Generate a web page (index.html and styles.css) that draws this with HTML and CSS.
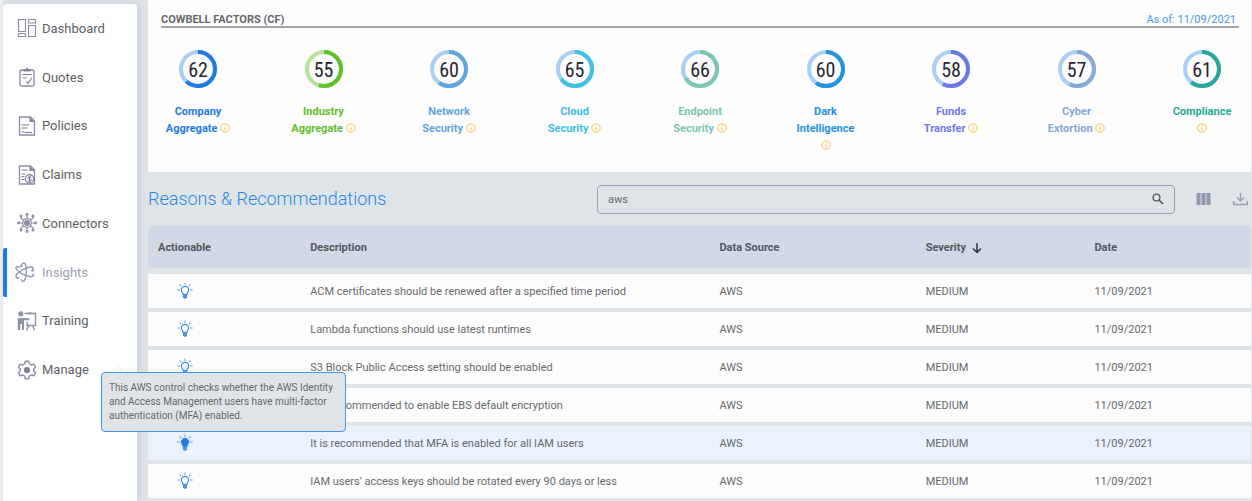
FILE: index.html
```html
<!DOCTYPE html>
<html lang="en">
<head>
<meta charset="utf-8">
<title>Insights</title>
<link rel="stylesheet" href="styles.css">
</head>
<body>
<svg class="defs" aria-hidden="true">
  <symbol id="info" viewBox="0 0 10 10"><circle cx="5" cy="5" r="4.2" fill="none" stroke="#fbc254" stroke-width="1"/><path d="M5 4.4v3M5 2.5v1" stroke="#fbc254" stroke-width="1.1"/></symbol>
  <symbol id="bulb" viewBox="0 0 16 18"><path d="M6.2 12.600C6.200 11 4.400 10.100 4.400 8a3.600 3.600 0 0 1 7.200 0c0 2.100-1.800 3-1.800 4.600z" stroke="#2f87e4" stroke-width="1.100"/><path d="M6 13h4v2.200l-1.200 1.600H7.200L6 15.200z" fill="#4a98ea"/><path d="M8 .5v2.300M.3 8h2.900M12.800 8h2.900M2.600 2.700l1.500 1.500M13.400 2.700 11.900 4.200" fill="none" stroke="#5ba2ec" stroke-width="1.100"/></symbol>
</svg>
<div class="app">
  <nav class="sidebar"><div class="nav-list">
    <a class="nav-item" href="#"><svg viewBox="0 0 20 20"><g fill="none" stroke="#8b8ca6" stroke-width="1.100"><path d="M1.500 1.500h7v12h-7zM11.500 1.500h7v3.500h-7zM11.500 7.500h7v11h-7zM1.500 15.500h7v3h-7z"/></g></svg>Dashboard</a>
    <a class="nav-item" href="#"><svg viewBox="0 0 20 20"><rect x="3" y="3" width="14" height="16" rx="2" fill="none" stroke="#8b8ca6" stroke-width="1.400"/><path d="M6.500 4.500V2.200h2L10 .2l1.500 2h2v2.300z" fill="#7d7e9b"/><path d="M5.500 7.500h9M5.500 11h4M9.500 14.500l1.500 2 4-6" fill="none" stroke="#7d7e9b" stroke-width="1.200"/></svg>Quotes</a>
    <a class="nav-item" href="#"><svg viewBox="0 0 20 20"><path d="M2.500 1h11L17.500 5v14h-15z" fill="none" stroke="#8b8ca6" stroke-width="1.300"/><path d="M12.500 1v5h5z" fill="#7d7e9b"/><path d="M4.500 9h8M4.500 12h6M4.500 16h3M8 16.500h7" fill="none" stroke="#7d7e9b" stroke-width="1.200"/></svg>Policies</a>
    <a class="nav-item" href="#"><svg viewBox="0 0 20 20"><path d="M2.500 1h11L17.500 5v14h-15z" fill="none" stroke="#8b8ca6" stroke-width="1.300"/><path d="M12.500 1v5h5z" fill="#7d7e9b"/><path d="M4.500 5h6M4.500 9h4M4.500 11.500h3M4.500 14.500h3" stroke="#7d7e9b" stroke-width="1.200"/><circle cx="12.500" cy="13.800" r="4.200" fill="#f2f2f6" stroke="#7d7e9b" stroke-width="1.100"/><path d="M14.300 12.300c-.5-1-3.400-1-3.400.3 0 1.500 3.500 1 3.500 2.500 0 1.400-3.200 1.300-3.700.2M12.600 10.700v6.300" fill="none" stroke="#7d7e9b"/></svg>Claims</a>
    <a class="nav-item" href="#"><svg viewBox="0 0 20 20"><g fill="none" stroke="#8b8ca6" stroke-width="1.200"><circle cx="10" cy="10" r="4.300"/><path d="M10 1v5M10 14v5M1 10h5M14 10h5M4 3v2l3 2.500M16 3v2l-3 2.500M4 17v-2l3-2.500M16 17v-2l-3-2.500"/></g><g fill="#8b8ca6"><circle cx="10" cy="10" r="3"/><circle cx="10" cy="1.400" r="1.400"/><circle cx="10" cy="18.600" r="1.400"/><circle cx="1.400" cy="10" r="1.400"/><circle cx="18.600" cy="10" r="1.400"/><circle cx="4" cy="3" r="1.500"/><circle cx="16" cy="3" r="1.500"/><circle cx="4" cy="17" r="1.500"/><circle cx="16" cy="17" r="1.500"/></g></svg>Connectors</a>
    <a class="nav-item active" href="#" aria-current="page"><svg viewBox="0 0 20 20"><g fill="none" stroke="#8c9ab3" stroke-width="1.400" stroke-linecap="round"><path d="M6.500 3.500C7 1 9.500 0 10.500 2.500c1.300 3 1 11-.5 15-1 2.500-3 2-3.700.2"/><path d="M4.500 5C2 4 .2 5 1.300 7c1.700 3 8 6.500 13.500 7.500 3.500.6 4.200-.8 3.200-2.500"/><path d="M2.500 16C.5 15.500.5 13.500 2 12 5 9 11 5.500 15 5c3-.3 4 1.500 2.500 3.500"/></g><g fill="#8c9ab3"><circle cx="6.300" cy="4" r="1.200"/><circle cx="17.500" cy="8.500" r="1.200"/><circle cx="3" cy="16" r="1.200"/></g></svg>Insights</a>
    <a class="nav-item" href="#"><svg viewBox="0 0 20 20"><circle cx="3.800" cy="2.800" r="2.600" fill="#8c95a8"/><path d="M.8 7h7.700l4 .5v1.700H7V19H5v-6H3.300v6H.8z" fill="#8c95a8"/><path d="M7.500 2.500H18.500V14.500H9M12 14.500 9.500 19.500M15.500 14.500l2 5M9.500 11l2 3.500" fill="none" stroke="#8c95a8" stroke-width="1.400"/><path d="M11.500 1.200h3v2h-3z" fill="#8c95a8"/></svg>Training</a>
    <a class="nav-item" href="#"><svg viewBox="0 0 20 20"><path d="M8.200 1.300h3.600l.6 2.600 1.900 1.100 2.500-.8 1.800 3.100-1.900 1.800v1.800l1.900 1.800-1.800 3.100-2.500-.8-1.900 1.100-.6 2.600H8.200l-.6-2.600L5.700 15l-2.500.8-1.800-3.100 1.900-1.800V9.100L1.400 7.300l1.800-3.100 2.500.8 1.900-1.100z" fill="none" stroke="#8b8ca6" stroke-width="1.400" stroke-linejoin="round"/><circle cx="10" cy="10" r="3.100" fill="#7d7e9b"/></svg>Manage<svg class="chevron" viewBox="0 0 6 10"><path d="M1 1l4 4-4 4" fill="none" stroke="#e4e6ea"/></svg></a>
  </div></nav>

  <main class="main">
    <section class="card">
      <header class="card-head"><h2>COWBELL FACTORS (CF)</h2><span class="as-of">As of: 11/09/2021</span></header>
      <div class="factors">
        <div class="factor company"><div class="ring"><svg viewBox="0 0 38 38"><circle class="track" cx="19" cy="19" r="17"/><circle class="arc" cx="19" cy="19" r="17" pathLength="100" stroke-dasharray="62 38"/></svg><span>62</span></div><p>Company<br>Aggregate <svg class="info"><use href="#info"/></svg></p></div>
        <div class="factor industry"><div class="ring"><svg viewBox="0 0 38 38"><circle class="track" cx="19" cy="19" r="17"/><circle class="arc" cx="19" cy="19" r="17" pathLength="100" stroke-dasharray="55 45"/></svg><span>55</span></div><p>Industry<br>Aggregate <svg class="info"><use href="#info"/></svg></p></div>
        <div class="factor network"><div class="ring"><svg viewBox="0 0 38 38"><circle class="track" cx="19" cy="19" r="17"/><circle class="arc" cx="19" cy="19" r="17" pathLength="100" stroke-dasharray="60 40"/></svg><span>60</span></div><p>Network<br>Security <svg class="info"><use href="#info"/></svg></p></div>
        <div class="factor cloud"><div class="ring"><svg viewBox="0 0 38 38"><circle class="track" cx="19" cy="19" r="17"/><circle class="arc" cx="19" cy="19" r="17" pathLength="100" stroke-dasharray="65 35"/></svg><span>65</span></div><p>Cloud<br>Security <svg class="info"><use href="#info"/></svg></p></div>
        <div class="factor endpoint"><div class="ring"><svg viewBox="0 0 38 38"><circle class="track" cx="19" cy="19" r="17"/><circle class="arc" cx="19" cy="19" r="17" pathLength="100" stroke-dasharray="66 34"/></svg><span>66</span></div><p>Endpoint<br>Security <svg class="info"><use href="#info"/></svg></p></div>
        <div class="factor dark"><div class="ring"><svg viewBox="0 0 38 38"><circle class="track" cx="19" cy="19" r="17"/><circle class="arc" cx="19" cy="19" r="17" pathLength="100" stroke-dasharray="60 40"/></svg><span>60</span></div><p>Dark<br>Intelligence<br><svg class="info"><use href="#info"/></svg></p></div>
        <div class="factor funds"><div class="ring"><svg viewBox="0 0 38 38"><circle class="track" cx="19" cy="19" r="17"/><circle class="arc" cx="19" cy="19" r="17" pathLength="100" stroke-dasharray="58 42"/></svg><span>58</span></div><p>Funds<br>Transfer <svg class="info"><use href="#info"/></svg></p></div>
        <div class="factor cyber"><div class="ring"><svg viewBox="0 0 38 38"><circle class="track" cx="19" cy="19" r="17"/><circle class="arc" cx="19" cy="19" r="17" pathLength="100" stroke-dasharray="57 43"/></svg><span>57</span></div><p>Cyber<br>Extortion <svg class="info"><use href="#info"/></svg></p></div>
        <div class="factor compliance"><div class="ring"><svg viewBox="0 0 38 38"><circle class="track" cx="19" cy="19" r="17"/><circle class="arc" cx="19" cy="19" r="17" pathLength="100" stroke-dasharray="61 39"/></svg><span>61</span></div><p>Compliance<br><svg class="info"><use href="#info"/></svg></p></div>
      </div>
    </section>

    <div class="toolbar">
      <h1>Reasons &amp; Recommendations</h1>
      <label class="search"><input type="text" value="aws" aria-label="Search recommendations"><svg viewBox="0 0 12 12"><circle cx="4.500" cy="4.500" r="3.400" fill="none" stroke="#55585c" stroke-width="1.400"/><path d="M7 7l4 4" stroke="#55585c" stroke-width="1.700"/></svg></label>
      <div class="tools">
        <button type="button" aria-label="Columns"><svg viewBox="0 0 16 16"><path d="M1 2h4v12H1zM6 2h4v12H6zM11 2h4v12h-4z" fill="#8f98ac"/></svg></button>
        <button type="button" aria-label="Download"><svg viewBox="0 0 16 16"><path d="M8 2v7.500M4.500 6.500 8 10l3.500-3.500" fill="none" stroke="#99a1b3" stroke-width="1.500"/><path d="M1.200 10v3.500h13.600V10" fill="none" stroke="#99a1b3" stroke-width="1.500"/></svg></button>
      </div>
    </div>

    <table class="grid">
      <colgroup><col class="c-action"><col class="c-desc"><col class="c-source"><col class="c-sev"><col class="c-date"></colgroup>
      <thead><tr><th>Actionable</th><th>Description</th><th>Data Source</th><th>Severity <svg class="sort" viewBox="0 0 10 12"><path d="M5 1v9.500M1 6.500l4 4 4-4" fill="none" stroke="#333" stroke-width="1.500"/></svg></th><th>Date</th></tr></thead>
      <tbody>
        <tr><td><svg class="bulb"><use href="#bulb"/></svg></td><td>ACM certificates should be renewed after a specified time period</td><td>AWS</td><td>MEDIUM</td><td>11/09/2021</td></tr>
        <tr><td><svg class="bulb"><use href="#bulb"/></svg></td><td>Lambda functions should use latest runtimes</td><td>AWS</td><td>MEDIUM</td><td>11/09/2021</td></tr>
        <tr><td><svg class="bulb"><use href="#bulb"/></svg></td><td>S3 Block Public Access setting should be enabled</td><td>AWS</td><td>MEDIUM</td><td>11/09/2021</td></tr>
        <tr><td><svg class="bulb"><use href="#bulb"/></svg></td><td>It is recommended to enable EBS default encryption</td><td>AWS</td><td>MEDIUM</td><td>11/09/2021</td></tr>
        <tr class="selected"><td><svg class="bulb"><use href="#bulb"/></svg></td><td>It is recommended that MFA is enabled for all IAM users</td><td>AWS</td><td>MEDIUM</td><td>11/09/2021</td></tr>
        <tr><td><svg class="bulb"><use href="#bulb"/></svg></td><td>IAM users' access keys should be rotated every 90 days or less</td><td>AWS</td><td>MEDIUM</td><td>11/09/2021</td></tr>
      </tbody>
    </table>
  </main>
  <div class="tooltip" role="tooltip">This AWS control checks whether the AWS Identity<br>and Access Management users have multi-factor<br>authentication (MFA) enabled.</div>
</div>
</body>
</html>
```
FILE: styles.css
```css
* { box-sizing: border-box; }
body { margin: 0; font-family: Roboto, "Liberation Sans", sans-serif; font-size: 11px; color: #66696c; background: #dfe4e8; }
h1, h2, p { margin: 0; }
.defs { position: absolute; width: 0; height: 0; }
.app { position: relative; display: flex; min-height: 100vh; padding: 0 1px 0 3px; background: linear-gradient(90deg, #f0f1f6 3px, #dfe4e8 3px); overflow: hidden; }

.sidebar { flex: 0 0 134px; margin-top: 4px; background: #fff; border-radius: 4px 4px 0 0; box-shadow: 2px 0 8px rgba(90, 100, 120, .16); }
.nav-list { display: grid; grid-template-rows: repeat(8, 1fr); height: 390px; }
.nav-item { display: flex; align-items: center; gap: 5px; padding-left: 14px; font-size: 13px; color: #5d6064; text-decoration: none; }
.nav-item svg { width: 20px; height: 20px; }
.nav-item.active { color: #9aa3b5; border-left: 4px solid #1f7be0; border-radius: 2px 0 0 2px; padding-left: 8px; gap: 7px; }
.nav-item .chevron { width: 6px; height: 9px; margin-left: auto; margin-right: 14px; }

.main { flex: 1; min-width: 0; margin-left: 11px; }
.card { min-height: 172px; padding: 12px 12px 0 13px; background: #fdfdfd; }
.card-head { display: flex; justify-content: space-between; align-items: center; height: 16px; padding: 0 3px 0 0; border-bottom: 2px solid #a4a4a4; }
.card-head h2 { font-size: 11px; font-weight: 700; }
.as-of { font-size: 11px; color: #4698ea; }
.factors { display: flex; justify-content: space-between; padding-top: 22px; }
.factor { width: 74px; text-align: center; color: var(--c); --t: #aacff5; }
.ring { width: 38px; height: 38px; margin: 0 auto; display: grid; place-items: center; }
.ring svg { grid-area: 1 / 1; width: 38px; height: 38px; transform: rotate(-90deg); }
.ring circle { fill: none; stroke-width: 4; }
.track { stroke: var(--t); }
.arc { stroke: var(--c); }
.ring span { grid-area: 1 / 1; font: 20px/24px "Roboto Condensed", "Liberation Sans Narrow", Roboto, sans-serif; color: #25252d; padding-top: 2px; }
.factor p { margin-top: 15px; font-size: 11px; font-weight: 700; line-height: 17px; white-space: nowrap; }
.info { width: 10px; height: 10px; vertical-align: -1px; }
.company { --c: #1f7be0; }
.industry { --c: #60c02c; --t: #b6e29a; }
.network { --c: #61a6dc; }
.cloud { --c: #41bfe5; }
.endpoint { --c: #7ac8b2; }
.dark { --c: #2492dc; }
.funds { --c: #6c79e3; }
.cyber { --c: #86a8d6; }
.compliance { --c: #26a898; }

.toolbar { display: flex; align-items: center; height: 54px; }
.toolbar h1 { flex: 0 0 449px; padding-bottom: 2px; font-size: 18px; font-weight: 300; color: #2c86e2; }
.search { flex: 1; display: flex; align-items: center; height: 29px; padding: 0 10px; border: 1px solid #98a1b8; border-radius: 4px; }
.search input { flex: 1; min-width: 0; padding: 0; border: 0; outline: 0; background: none; font: inherit; color: #66696c; }
.search svg { width: 12px; height: 12px; }
.tools { display: flex; gap: 20px; padding: 0 2px 0 20px; }
.tools button { display: flex; padding: 0; border: 0; background: none; }
.tools svg { width: 17px; height: 16px; }

.grid { width: 100%; table-layout: fixed; border-collapse: separate; border-spacing: 0 4px; margin-top: -4px; }
.c-action { width: 13.8%; }
.c-desc { width: 37.1%; }
.c-source { width: 18.7%; }
.c-sev { width: 15.3%; }
.grid th, .grid td { padding: 0 10px; text-align: left; white-space: nowrap; }
.grid th { height: 44px; background: #d1d8e6 padding-box; border-bottom: 2px solid transparent; color: #55585c; }
.grid th:first-child { border-top-left-radius: 4px; }
.grid th:last-child { border-top-right-radius: 4px; }
.grid td { height: 34px; background: #fdfdfd; }
.grid .selected td { background: #eaf2fe; }
.grid td:first-child { padding-left: 29px; }
.bulb { display: block; width: 16px; height: 18px; fill: none; }
.selected .bulb { fill: #1f7be0; }
.sort { width: 10px; height: 12px; margin-left: 3px; vertical-align: -3px; }

.tooltip { position: absolute; left: 101px; top: 372px; width: 245px; padding: 8px 7px; background: #dfe4e8; border: 1px solid #4296ea; border-radius: 4px; font-size: 10px; line-height: 14px; white-space: nowrap; }
```
